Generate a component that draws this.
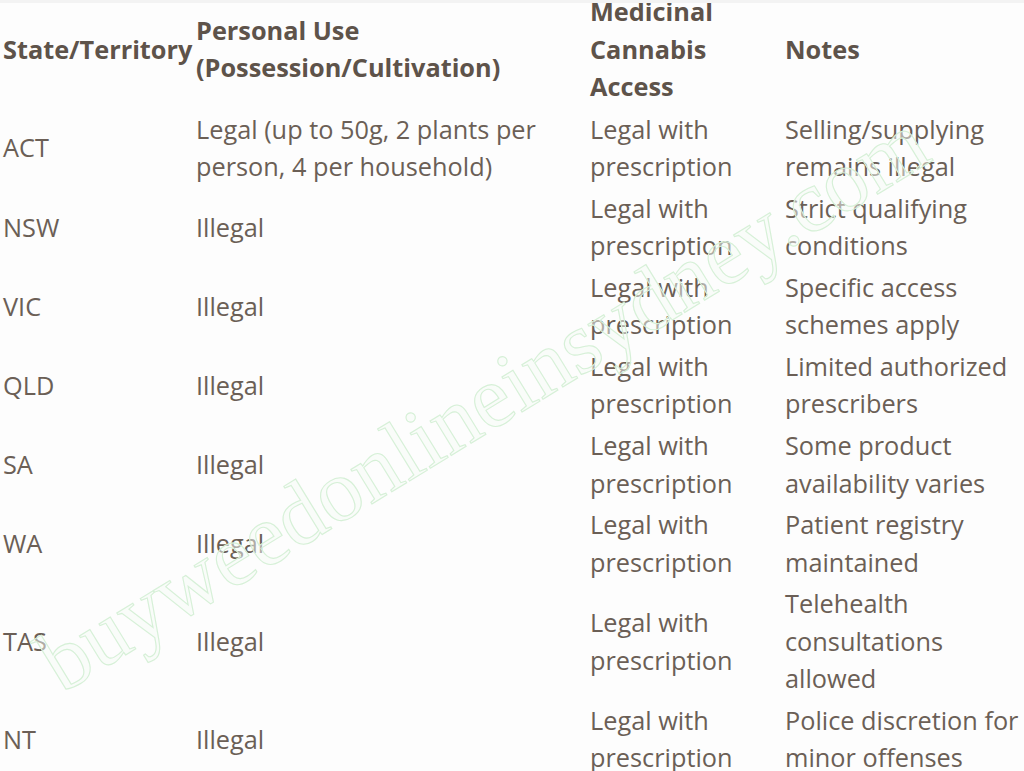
import React from "react";

const rows: [string, string, string, string][] = [
  ["ACT", "Legal (up to 50g, 2 plants per person, 4 per household)", "Legal with prescription", "Selling/supplying remains illegal"],
  ["NSW", "Illegal", "Legal with prescription", "Strict qualifying conditions"],
  ["VIC", "Illegal", "Legal with prescription", "Specific access schemes apply"],
  ["QLD", "Illegal", "Legal with prescription", "Limited authorized prescribers"],
  ["SA", "Illegal", "Legal with prescription", "Some product availability varies"],
  ["WA", "Illegal", "Legal with prescription", "Patient registry maintained"],
  ["TAS", "Illegal", "Legal with prescription", "Telehealth consultations allowed"],
  ["NT", "Illegal", "Legal with prescription", "Police discretion for minor offenses"],
];

export default function App() {
  return (
    <div
      className="relative h-[771px] w-[1024px] overflow-hidden bg-[#fdfdfd] pl-[1px] text-[#6b5f56]"
      style={{ fontFamily: '"Open Sans", "Noto Sans", sans-serif' }}
    >
      <table className="-mt-[9px] w-[1023px] table-fixed text-[25.3px] leading-[37.55px]">
        <colgroup>
          <col className="w-[193px]" />
          <col className="w-[394px]" />
          <col className="w-[195px]" />
          <col />
        </colgroup>
        <thead>
          <tr className="text-left align-middle font-bold text-[#5e534a]">
            <th className="px-[2px] pb-[3px] pt-[2px] font-bold">State/Territory</th>
            <th className="px-[2px] pb-[3px] pt-[2px] font-bold">Personal Use (Possession/Cultivation)</th>
            <th className="px-[2px] pb-[3px] pt-[2px] font-bold">Medicinal Cannabis Access</th>
            <th className="px-[2px] pb-[3px] pt-[2px] font-bold">Notes</th>
          </tr>
        </thead>
        <tbody>
          {rows.map((r) => (
            <tr key={r[0]} className="align-middle">
              {r.map((c, i) => (
                <td key={i} className="px-[2px] py-[2px]">
                  {c}
                </td>
              ))}
            </tr>
          ))}
        </tbody>
      </table>

      <div className="pointer-events-none absolute left-0 top-0 h-[3px] w-full bg-[#f3f3f3]" />

      <svg
        className="pointer-events-none absolute left-0 top-0"
        width="1024"
        height="771"
        viewBox="0 0 1024 771"
      >
        <text
          x="62"
          y="694"
          transform="rotate(-31.5 62 694)"
          fontFamily='"Liberation Serif", "DejaVu Serif", serif'
          fontSize="88"
          fill="#f6fcf6"
          fillOpacity="0.5"
          stroke="#d6f0d7"
          strokeWidth="1.1"
        >
          buyweedonlineinsydney.com
        </text>
      </svg>
    </div>
  );
}
